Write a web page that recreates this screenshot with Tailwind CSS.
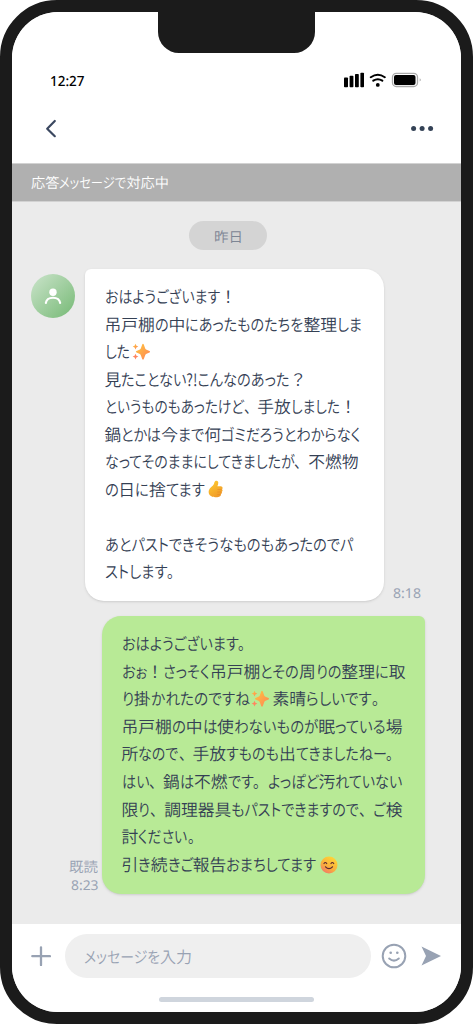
<!DOCTYPE html>
<html lang="ja">
<head>
<meta charset="utf-8">
<title>トーク</title>
<script src="https://cdn.jsdelivr.net/npm/@tailwindcss/browser@4"></script>
</head>
<body class="w-[473px] h-[1024px] overflow-hidden bg-white font-['Noto_Sans_CJK_JP',sans-serif] font-[350] [text-rendering:geometricPrecision]">
<svg class="absolute" width="0" height="0">
  <defs>
    <linearGradient id="gold" x1="0" y1="0" x2="1" y2="1"><stop offset="0" stop-color="#ffc83d"/><stop offset="1" stop-color="#ff8257"/></linearGradient>
    <linearGradient id="thumb" x1="0" y1="0" x2=".6" y2="1"><stop offset="0" stop-color="#ffd02e"/><stop offset="1" stop-color="#f09a2a"/></linearGradient>
    <linearGradient id="face" x1=".8" y1="0" x2=".2" y2="1"><stop offset="0" stop-color="#ffd836"/><stop offset=".6" stop-color="#f9ae3c"/><stop offset="1" stop-color="#f2706c"/></linearGradient>
    <symbol id="sparkles" viewBox="0 0 18 18"><g fill="url(#gold)"><path d="M10.200 1.500q.8-1.500 1.600 0l1.400 3.900q.4 1 1.400 1.400l2.900 1.300q1.200.7 0 1.400l-2.900 1.300q-1 .4-1.400 1.400l-1.400 3.900q-.8 1.500-1.600 0l-1.400-3.900q-.4-1-1.400-1.400l-2.900-1.300q-1.200-.7 0-1.400l2.900-1.300q1-.4 1.400-1.400z"/><path d="M3.500.8l.9 1.900 1.900.9-1.900.9-.9 1.900-.9-1.900L.7 3.600l1.900-.9z"/></g><path fill="#ff8660" d="M3.500 10.700l.9 2 2 .9-2 .9-.9 2-.9-2-2-.9 2-.9z"/></symbol>
    <symbol id="thumbsup" viewBox="0 0 15 18"><path fill="url(#thumb)" d="M7.300 1C8.700.1 10.300.9 10.300 2.600c0 1.300-.4 2.600-.9 3.700h3.300c1.900 0 2.400 2 1.300 2.900.8.800.7 2.100-.3 2.600.5.900.2 1.900-.8 2.300.2 1.300-.5 2.300-1.700 2.600-2.800.8-6.200.9-8.300-.6C.8 14.600.3 12.400.9 10.300 1.600 7.700 4.800 6.500 5.800 4.300 6.300 3.200 6.300 1.800 7.300 1z"/><path fill="none" stroke="#e68a22" stroke-width=".6" d="M9.500 9.500h4M9.300 12h4M9.300 14.500h3"/></symbol>
    <symbol id="blush" viewBox="0 0 18 18"><circle cx="9" cy="9" r="8.500" fill="url(#face)"/><g fill="none" stroke="#5c2a32" stroke-width="1.200" stroke-linecap="round"><path d="M4 7.500q1.300-2 2.700 0M11 7.500q1.300-2 2.700 0M5.500 10.800q3.500 3.700 7 0"/></g></symbol>
  </defs>
</svg>
<div class="relative w-[473px] h-[1024px] rounded-[57px] border-12 border-[#1b1b1b] bg-[#1b1b1b]">
  <div class="absolute z-10 left-[146px] -top-px w-[157px] h-[42px] rounded-b-[21px] bg-[#1b1b1b]"></div>
  <main class="flex h-[1000px] w-[449px] flex-col overflow-hidden rounded-[46px] bg-[#ebebeb]">
    <header class="h-[151px] shrink-0 bg-white">
      <div class="flex h-[138px] flex-col pt-[58px]">
        <div class="flex h-5 items-center justify-between pl-[38px] pr-[39px]">
          <span class="ln pt-0.5 text-[14px] font-medium text-black font-['Noto_Sans',sans-serif]" data-w="34.500">12:27</span>
          <svg width="78" height="16" viewBox="0 0 78 16"><g><rect x="0" y="5.500" width="4" height="9.700" rx=".8"/><rect x="5.600" y="3.800" width="3.800" height="11.400" rx=".8"/><rect x="11" y="2" width="3.800" height="13.200" rx=".8"/><rect x="16.400" y=".8" width="3.600" height="14.400" rx=".8"/></g><g fill="none" stroke="#000" stroke-width="2" stroke-linecap="round"><path d="M26.800 5.200q7-4.800 14 0M29.300 8.700q4.500-3 9 0"/></g><circle cx="33.800" cy="12.900" r="1.900"/><rect x="48.500" y="1.300" width="25" height="13.200" rx="3.800" fill="none" stroke="#aaa" stroke-width="1.300"/><rect x="50" y="3" width="21.500" height="10" rx="2"/><path d="M75.700 6.200q2.200 1.700 0 3.400z" fill="#aaa"/></svg>
        </div>
        <div class="mt-[26px] flex h-6 items-center justify-between pl-[32px] pr-[27px]">
          <svg width="14" height="20" viewBox="0 0 14 20" fill="none" stroke="#3b4860" stroke-width="2.200" stroke-linecap="round" stroke-linejoin="round"><path d="M10.800 3L3.200 10.700l7.600 7.500"/></svg>
          <svg width="24" height="8" viewBox="0 0 24 8" fill="#344256"><circle cx="3.600" cy="4.500" r="2.500"/><circle cx="12.100" cy="4.500" r="2.500"/><circle cx="20.600" cy="4.500" r="2.500"/></svg>
        </div>
      </div>
    </header>
    <div class="flex h-[38.500px] shrink-0 items-center border-y border-[#d2d2d2] bg-[#b0b0b0] pl-[19px] text-[14.200px] text-white"><span class="ln pt-0.5" data-w="138">応答メッセージで対応中</span></div>
    <section class="flex flex-1 flex-col text-[#344054]">
      <div class="mt-[19.500px] ml-[177px] flex h-[29px] w-[78px] items-center justify-center rounded-full bg-[#d4d4d4] text-[14px] text-[#7d8594]"><span class="ln pt-[3px]" data-w="29">昨日</span></div>
      <div class="mt-[19px] flex pl-[19px]">
        <div class="mt-[5px] flex size-[44px] shrink-0 items-center justify-center rounded-full bg-linear-to-br from-[#cbe4cb] to-[#75b975]"><svg width="18" height="18" viewBox="0 0 18 18"><circle cx="9" cy="5.300" r="3.700" fill="#fff"/><path d="M1.800 16c1.200-7 13.200-7 14.400 0" fill="none" stroke="#fff" stroke-width="2.100" stroke-linecap="round"/></svg></div>
        <div class="ml-[10px] h-[332px] w-[299px] shrink-0 rounded-[19px] rounded-tl-[6px] bg-white pl-[19.500px] pt-[14px] text-[16.800px] leading-[27.500px] shadow-sm">
          <p class="h-[27.500px]"><span class="ln" data-w="132">おはようございます！</span></p>
          <p class="h-[27.500px]"><span class="ln" data-w="257.500">吊戸棚の中にあったものたちを整理しま</span></p>
          <p class="flex h-[27.500px] items-center"><span class="ln" data-w="25">した</span><svg class="ml-[2px]" width="18" height="18"><use href="#sparkles"/></svg></p>
          <p class="h-[27.500px]"><span class="ln" data-w="202">見たことない?!こんなのあった？</span></p>
          <p class="h-[27.500px]"><span class="ln" data-w="252">というものもあったけど、手放しました！</span></p>
          <p class="h-[27.500px]"><span class="ln" data-w="256">鍋とかは今まで何ゴミだろうとわからなく</span></p>
          <p class="h-[27.500px]"><span class="ln" data-w="254">なってそのままにしてきましたが、不燃物</span></p>
          <p class="flex h-[27.500px] items-center"><span class="ln" data-w="100">の日に捨てます</span><svg class="ml-[4px]" width="15" height="18"><use href="#thumbsup"/></svg></p>
          <p class="h-[27.500px]"></p>
          <p class="h-[27.500px]"><span class="ln" data-w="248.500">あとパストできそうなものもあったのでパ</span></p>
          <p class="h-[27.500px]"><span class="ln" data-w="77">ストします。</span></p>
        </div>
        <span class="ml-[9px] self-end font-['Noto_Sans',sans-serif] font-normal text-[13.500px] leading-[16px] text-[#98a2b3]"><span class="ln" data-w="28">8:18</span></span>
      </div>
      <div class="mt-[15px] flex pl-[56px]">
        <div class="flex w-[30px] shrink-0 flex-col items-end self-end text-[14px] leading-[18px] text-[#98a2b3]"><span class="ln pt-px" data-w="29">既読</span><span class="ln font-['Noto_Sans',sans-serif] font-normal text-[13.500px]" data-w="27.500">8:23</span></div>
        <div class="ml-[4px] h-[278px] w-[322.500px] shrink-0 rounded-[19px] rounded-tr-[6px] bg-[#b8ea96] pl-[19.500px] pt-[14px] text-[16.800px] leading-[27.600px] shadow-sm">
          <p class="h-[27.600px]"><span class="ln" data-w="131">おはようございます。</span></p>
          <p class="h-[27.600px]"><span class="ln" data-w="284">おぉ！さっそく吊戸棚とその周りの整理に取</span></p>
          <p class="flex h-[27.600px] items-center"><span class="ln" data-w="128">り掛かれたのですね</span><svg class="ml-[2px] mr-[3px]" width="18" height="18"><use href="#sparkles"/></svg><span class="ln" data-w="114">素晴らしいです。</span></p>
          <p class="h-[27.600px]"><span class="ln" data-w="281">吊戸棚の中は使わないものが眠っている場</span></p>
          <p class="h-[27.600px]"><span class="ln" data-w="279">所なので、手放すものも出てきましたねー。</span></p>
          <p class="h-[27.600px]"><span class="ln" data-w="281">はい、鍋は不燃です。よっぽど汚れていない</span></p>
          <p class="h-[27.600px]"><span class="ln" data-w="281">限り、調理器具もパストできますので、ご検</span></p>
          <p class="h-[27.600px]"><span class="ln" data-w="80">討ください。</span></p>
          <p class="flex h-[27.600px] items-center"><span class="ln" data-w="195">引き続きご報告おまちしてます</span><svg class="ml-[4px]" width="18" height="18"><use href="#blush"/></svg></p>
        </div>
      </div>
    </section>
    <footer class="h-[88px] shrink-0 bg-white pt-[10px]">
      <div class="flex h-11 items-center pl-[19px]">
        <svg width="20" height="20" viewBox="0 0 20 20" stroke="#98a2b3" stroke-width="2.300" stroke-linecap="round"><path d="M10 1.300v17.800M1.300 10.200h17.600"/></svg>
        <div class="ml-[14px] flex h-11 w-[306px] items-center rounded-full bg-[#efefef] pl-[19px] text-[16px] text-[#98a2b3]"><span class="ln" data-w="108">メッセージを入力</span></div>
        <svg class="ml-[10px]" width="26" height="26" viewBox="0 0 26 26" fill="none" stroke="#98a2b3" stroke-width="2"><circle cx="13" cy="13" r="11.300"/><path d="M8.200 15.500q4.800 4.300 9.600 0" stroke-linecap="round"/><g fill="#98a2b3" stroke="none"><circle cx="9.700" cy="9.700" r="1.300"/><circle cx="16.300" cy="9.700" r="1.300"/></g></svg>
        <svg class="ml-[13px]" width="22" height="22" viewBox="0 0 22 22" fill="#98a2b3"><path d="M1.500 1.500L21 11 1.500 20.500 6 11z"/></svg>
      </div>
      <div class="ml-[147px] mt-[19px] h-[5px] w-[155px] rounded-full bg-[#cfd5dd]"></div>
    </footer>
  </main>
</div>
<script>
// Sets kana narrower than kanji so that every line fills its given width.
const lines = [...document.querySelectorAll('.ln')].map(line => {
  const runs = line.textContent.match(/[ぁ-んァ-ヶー?!]+|[、。]|[^ぁ-んァ-ヶー?!、。]+/g);
  line.textContent = '';
  line.style.whiteSpace = 'nowrap';
  line.style.display = 'inline-flex';
  const parts = runs.map(t => {
    const s = document.createElement('span');
    const g = document.createElement('span');
    g.textContent = t;
    s.append(g);
    s.style.flex = 'none';
    const kana = /[ぁ-んァ-ヶー]/.test(t);
    if (kana) g.style.fontFeatureSettings = '"palt"';
    g.style.display = 'inline-block';
    g.style.transformOrigin = '0 50%';
    line.append(s);
    return { s, g, narrow: kana || /[、。]/.test(t) };
  });
  return { parts, target: Number(line.dataset.w) };
});
function fit() {
  lines.forEach(({ parts, target }) => {
    parts.forEach(p => { p.g.style.transform = 'none'; p.s.style.width = 'auto'; });
    parts.forEach(p => p.w = p.g.getBoundingClientRect().width);
    const sum = list => list.reduce((a, p) => a + p.w, 0);
    const narrow = sum(parts.filter(p => p.narrow));
    const wide = sum(parts.filter(p => !p.narrow));
    const k = narrow ? (target - wide) / narrow : target / wide;
    parts.forEach(p => {
      if (narrow && !p.narrow) return;
      p.s.style.width = p.w * k + 'px';
      p.g.style.transform = `scaleX(${k})`;
    });
  });
}
fit();
addEventListener('load', fit);
document.fonts.ready.then(fit);
// The runs change size when the stylesheet arrives.
const watch = new ResizeObserver(fit);
lines.forEach(l => l.parts.forEach(p => watch.observe(p.g)));
</script>
</body>
</html>
